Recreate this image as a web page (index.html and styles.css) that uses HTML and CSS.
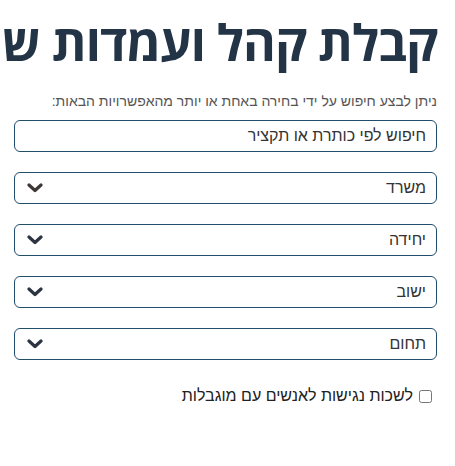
FILE: index.html
```html
<!DOCTYPE html>
<html lang="he" dir="rtl">
<head>
<meta charset="utf-8">
<link rel="stylesheet" href="styles.css">
</head>
<body>
<main class="page">
  <h1 class="title">קבלת קהל ועמדות שירות</h1>
  <p class="intro">ניתן לבצע חיפוש על ידי בחירה באחת או יותר מהאפשרויות הבאות:</p>
  <div class="fields">
    <div class="field"><span class="field-text">חיפוש לפי כותרת או תקציר</span></div>
    <div class="field select"><span class="field-text">משרד</span><svg class="chev" width="16" height="10" viewBox="0 0 16 10"><polyline points="2,2 8,7.5 14,2" fill="none" stroke="#3d3835" stroke-width="3.2" stroke-linecap="round" stroke-linejoin="round"/></svg></div>
    <div class="field select"><span class="field-text">יחידה</span><svg class="chev" width="16" height="10" viewBox="0 0 16 10"><polyline points="2,2 8,7.5 14,2" fill="none" stroke="#2b3440" stroke-width="3.2" stroke-linecap="round" stroke-linejoin="round"/></svg></div>
    <div class="field select"><span class="field-text">ישוב</span><svg class="chev" width="16" height="10" viewBox="0 0 16 10"><polyline points="2,2 8,7.5 14,2" fill="none" stroke="#2b3440" stroke-width="3.2" stroke-linecap="round" stroke-linejoin="round"/></svg></div>
    <div class="field select"><span class="field-text">תחום</span><svg class="chev" width="16" height="10" viewBox="0 0 16 10"><polyline points="2,2 8,7.5 14,2" fill="none" stroke="#2b3440" stroke-width="3.2" stroke-linecap="round" stroke-linejoin="round"/></svg></div>
  </div>
  <label class="check"><input type="checkbox" class="box"><span>לשכות נגישות לאנשים עם מוגבלות</span></label>
</main>
</body>
</html>
```

FILE: styles.css
```css
html, body {
  margin: 0;
  padding: 0;
  background: #ffffff;
  overflow: hidden;
}
.page {
  direction: rtl;
  padding: 0 18px 0 14px;
  font-family: "Liberation Sans", Arial, sans-serif;
  color: #333333;
}
.title {
  margin: 0;
  padding-top: 8px;
  font-family: "Open Sans", sans-serif;
  font-weight: 700;
  font-size: 50px;
  line-height: 68px;
  letter-spacing: -1px;
  color: #223445;
  white-space: nowrap;
}
.intro {
  margin: 16px 0 10px 0;
  font-size: 14px;
  line-height: 18px;
  color: #555555;
  white-space: nowrap;
}
.fields {
  display: flex;
  flex-direction: column;
  gap: 20px;
}
.field {
  height: 30px;
  border: 1px solid #1f4d6b;
  border-radius: 6px;
  display: flex;
  align-items: center;
  justify-content: space-between;
  padding: 0 10px 0 12px;
  font-size: 16px;
  color: #333333;
}
.chev {
  display: block;
}
.check {
  display: flex;
  align-items: center;
  margin-top: 27px;
  padding-right: 5px;
  font-size: 16px;
  color: #222222;
}
.box {
  margin: 0 0 0 6px;
  width: 13px;
  height: 13px;
}
```
